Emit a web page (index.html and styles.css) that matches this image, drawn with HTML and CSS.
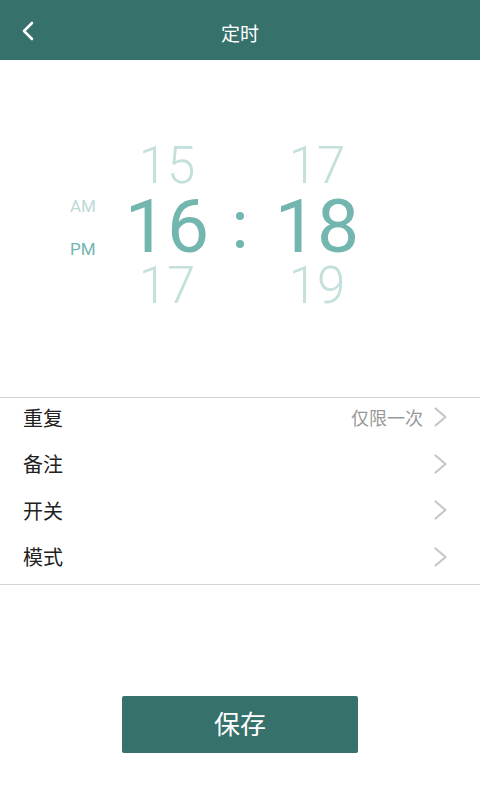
FILE: index.html
```html
<!DOCTYPE html>
<html lang="zh-CN">
<head>
<meta charset="utf-8">
<title>定时</title>
<link rel="stylesheet" href="styles.css">
</head>
<body>
<header class="topbar">
  <button class="back" aria-label="返回">
    <svg width="14" height="20" viewBox="0 0 14 20"><path d="M11 2 L3 10 L11 18" fill="none" stroke="#fff" stroke-width="2.6" stroke-linecap="round" stroke-linejoin="round"/></svg>
  </button>
  <h1 class="title">定时</h1>
</header>

<section class="picker">
  <div class="wheel">
    <div class="ampm">
      <span class="ampm-item faded">AM</span>
      <span class="ampm-item active">PM</span>
    </div>
    <div class="col hours">
      <span class="num faded">15</span>
      <span class="num main">16</span>
      <span class="num faded">17</span>
    </div>
    <div class="colon"><i class="dot"></i><i class="dot"></i></div>
    <div class="col minutes">
      <span class="num faded">17</span>
      <span class="num main">18</span>
      <span class="num faded">19</span>
    </div>
  </div>
</section>

<ul class="list">
  <li class="row"><span class="label">重复</span><span class="value">仅限一次</span><svg class="chev" width="15" height="20" viewBox="0 0 15 20"><path d="M2.5 1.5 L12.5 10 L2.5 18.5" fill="none" stroke="#c6c6c6" stroke-width="2.2" stroke-linecap="round" stroke-linejoin="round"/></svg></li>
  <li class="row"><span class="label">备注</span><span class="value"></span><svg class="chev" width="15" height="20" viewBox="0 0 15 20"><path d="M2.5 1.5 L12.5 10 L2.5 18.5" fill="none" stroke="#c6c6c6" stroke-width="2.2" stroke-linecap="round" stroke-linejoin="round"/></svg></li>
  <li class="row"><span class="label">开关</span><span class="value"></span><svg class="chev" width="15" height="20" viewBox="0 0 15 20"><path d="M2.5 1.5 L12.5 10 L2.5 18.5" fill="none" stroke="#c6c6c6" stroke-width="2.2" stroke-linecap="round" stroke-linejoin="round"/></svg></li>
  <li class="row"><span class="label">模式</span><span class="value"></span><svg class="chev" width="15" height="20" viewBox="0 0 15 20"><path d="M2.5 1.5 L12.5 10 L2.5 18.5" fill="none" stroke="#c6c6c6" stroke-width="2.2" stroke-linecap="round" stroke-linejoin="round"/></svg></li>
</ul>

<div class="actions">
  <button class="save">保存</button>
</div>
</body>
</html>
```

FILE: styles.css
```css
* { box-sizing: border-box; }
html, body { margin: 0; padding: 0; background: #fff; }
body {
  width: 480px;
  height: 800px;
  font-family: "Noto Sans CJK SC", "Noto Sans", Roboto, sans-serif;
  overflow: hidden;
}

.topbar {
  height: 60px;
  background: #37716b;
  display: flex;
  align-items: center;
  justify-content: center;
  position: relative;
}
.back {
  position: absolute;
  left: 21px;
  top: 21px;
  width: 16px;
  height: 22px;
  padding: 0;
  border: 0;
  background: none;
  display: flex;
}
.title {
  margin: 0;
  font-size: 19px;
  font-weight: 400;
  color: #fff;
  line-height: 1;
  padding-top: 5px;
}

.picker {
  height: 337px;
  padding-top: 76px;
}
.wheel {
  display: flex;
  height: 180px;
  padding-left: 70px;
}
.ampm {
  width: 30px;
  display: flex;
  flex-direction: column;
  justify-content: center;
  padding-top: 3px;
}
.ampm-item {
  font-family: Roboto, "Noto Sans", sans-serif;
  font-size: 17px;
  line-height: 43px;
  height: 43px;
}
.ampm-item.faded { color: #bcdad6; }
.ampm-item.active { color: #72b6af; }

.col {
  display: flex;
  flex-direction: column;
  align-items: center;
}
.hours { width: 134px; }
.minutes { width: 142px; }
.num {
  font-family: Roboto, "Noto Sans", sans-serif;
  font-weight: 300;
  height: 60px;
  line-height: 60px;
  display: block;
}
.num.main { font-size: 75px; color: #72b6af; font-weight: 400; }
.num.faded { font-size: 51px; color: #c4e0dc; }

.colon {
  width: 12px;
  display: flex;
  flex-direction: column;
  align-items: center;
  justify-content: center;
  gap: 20px;
  padding-top: 7px;
}
.dot {
  width: 8px;
  height: 8px;
  border-radius: 50%;
  background: #72b6af;
}

.list {
  list-style: none;
  margin: 0;
  padding: 0;
  border-top: 1px solid #d4d4d4;
  border-bottom: 1px solid #d4d4d4;
}
.row {
  height: 46.5px;
  display: flex;
  align-items: center;
  padding: 0 32px 8px 23px;
}
.label {
  font-size: 20px;
  color: #222;
  flex: 1;
}
.value {
  font-size: 18px;
  color: #999;
  margin-right: 10px;
}
.chev { display: block; }

.actions {
  display: flex;
  justify-content: center;
  padding-top: 111px;
}
.save {
  width: 236px;
  height: 57px;
  border: 0;
  border-radius: 2px;
  background: #37716b;
  color: #fff;
  font-family: "Noto Sans CJK SC", sans-serif;
  font-size: 26px;
  line-height: 1;
  padding: 0 0 4px;
}
```
